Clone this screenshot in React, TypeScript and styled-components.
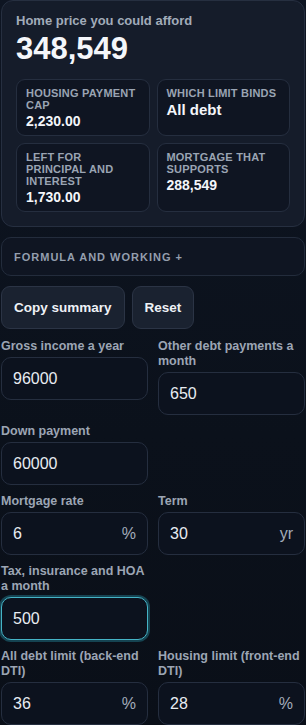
import styled, { createGlobalStyle } from "styled-components";

const GlobalStyle = createGlobalStyle`
  * { box-sizing: border-box; }
  html, body {
    margin: 0;
    padding: 0;
    background: linear-gradient(180deg, #0e1522 0%, #0b111b 60%, #0a0f18 100%);
    min-height: 100%;
    font-family: "Liberation Sans", Arial, sans-serif;
    color: #e6ebf2;
  }
`;

const Page = styled.div`
  padding: 0 1px;
  display: flex;
  flex-direction: column;
`;

const ResultCard = styled.section`
  background: #151c2a;
  border: 1px solid #262f40;
  border-radius: 12px;
  padding: 12px 14px 14px;
`;

const Eyebrow = styled.div`
  font-size: 13px;
  font-weight: 700;
  color: #a1abb9;
  line-height: 16px;
`;

const BigNumber = styled.div`
  font-size: 31px;
  font-weight: 700;
  color: #f4f6fa;
  line-height: 36px;
  margin: 2px 0 12px;
`;

const StatGrid = styled.div`
  display: grid;
  grid-template-columns: minmax(0, 1fr) minmax(0, 1fr);
  gap: 7px;
`;

const Stat = styled.div`
  background: #0f1522;
  border: 1px solid #252e3f;
  border-radius: 9px;
  padding: 7px 9px 5px;
`;

const StatLabel = styled.div`
  font-size: 11px;
  font-weight: 700;
  letter-spacing: 0.2px;
  text-transform: uppercase;
  color: #9aa4b3;
  line-height: 12px;
`;

const StatValue = styled.div<{ $big?: boolean }>`
  font-size: ${(p) => (p.$big ? "15px" : "14px")};
  font-weight: 700;
  color: #f4f6fa;
  line-height: 17px;
  margin-top: 2px;
`;

const Formula = styled.div`
  margin-top: 10px;
  height: 39px;
  display: flex;
  align-items: center;
  padding: 0 12px;
  border: 1px solid #232c3c;
  border-radius: 10px;
  background: #0f1522;
  font-size: 11px;
  font-weight: 700;
  letter-spacing: 1px;
  text-transform: uppercase;
  color: #949eae;
`;

const Actions = styled.div`
  margin-top: 10px;
  display: flex;
  gap: 7px;
`;

const Button = styled.button`
  height: 43px;
  padding: 0 12px;
  background: #1a2230;
  border: 1px solid #2b3445;
  border-radius: 9px;
  color: #eef1f6;
  font-family: inherit;
  font-size: 13.5px;
  font-weight: 700;
`;

const Fields = styled.div`
  margin-top: 10px;
  display: grid;
  grid-template-columns: minmax(0, 1fr) minmax(0, 1fr);
  column-gap: 10px;
  row-gap: 9px;
  align-items: start;
`;

const Field = styled.label`
  display: flex;
  flex-direction: column;
  min-width: 0;
`;

const Label = styled.span`
  font-size: 12.5px;
  font-weight: 700;
  color: #9ca5b4;
  line-height: 15px;
  margin-bottom: 3px;
`;

const InputWrap = styled.div<{ $focused?: boolean }>`
  height: 43px;
  display: flex;
  align-items: center;
  padding: 0 11px;
  background: #0c121e;
  border: 1px solid ${(p) => (p.$focused ? "#45b3c6" : "#252e3f")};
  border-radius: 10px;
  box-shadow: ${(p) => (p.$focused ? "0 0 0 2px rgba(36, 130, 150, 0.45)" : "none")};
`;

const Input = styled.input`
  flex: 1;
  width: 0;
  min-width: 0;
  background: transparent;
  border: none;
  outline: none;
  padding: 0;
  color: #e8ecf2;
  font-family: inherit;
  font-size: 16px;
`;

const Unit = styled.span`
  font-size: 16px;
  color: #a3acba;
  margin-left: 6px;
`;

interface FieldDef {
  label: string;
  value: string;
  unit?: string;
  focused?: boolean;
  spanRow?: boolean;
}

const fields: FieldDef[] = [
  { label: "Gross income a year", value: "96000" },
  { label: "Other debt payments a month", value: "650" },
  { label: "Down payment", value: "60000", spanRow: true },
  { label: "Mortgage rate", value: "6", unit: "%" },
  { label: "Term", value: "30", unit: "yr" },
  { label: "Tax, insurance and HOA a month", value: "500", focused: true, spanRow: true },
  { label: "All debt limit (back-end DTI)", value: "36", unit: "%" },
  { label: "Housing limit (front-end DTI)", value: "28", unit: "%" },
];

function App() {
  return (
    <>
      <GlobalStyle />
      <Page>
        <ResultCard>
          <Eyebrow>Home price you could afford</Eyebrow>
          <BigNumber>348,549</BigNumber>
          <StatGrid>
            <Stat>
              <StatLabel>Housing payment cap</StatLabel>
              <StatValue>2,230.00</StatValue>
            </Stat>
            <Stat>
              <StatLabel>Which limit binds</StatLabel>
              <StatValue $big>All debt</StatValue>
            </Stat>
            <Stat>
              <StatLabel>Left for principal and interest</StatLabel>
              <StatValue>1,730.00</StatValue>
            </Stat>
            <Stat>
              <StatLabel>Mortgage that supports</StatLabel>
              <StatValue>288,549</StatValue>
            </Stat>
          </StatGrid>
        </ResultCard>

        <Formula>Formula and working +</Formula>

        <Actions>
          <Button>Copy summary</Button>
          <Button>Reset</Button>
        </Actions>

        <Fields>
          {fields.map((f) => (
            <>
              <Field key={f.label}>
                <Label>{f.label}</Label>
                <InputWrap $focused={f.focused}>
                  <Input defaultValue={f.value} />
                  {f.unit && <Unit>{f.unit}</Unit>}
                </InputWrap>
              </Field>
              {f.spanRow && <div />}
            </>
          ))}
        </Fields>
      </Page>
    </>
  );
}

export default App;
